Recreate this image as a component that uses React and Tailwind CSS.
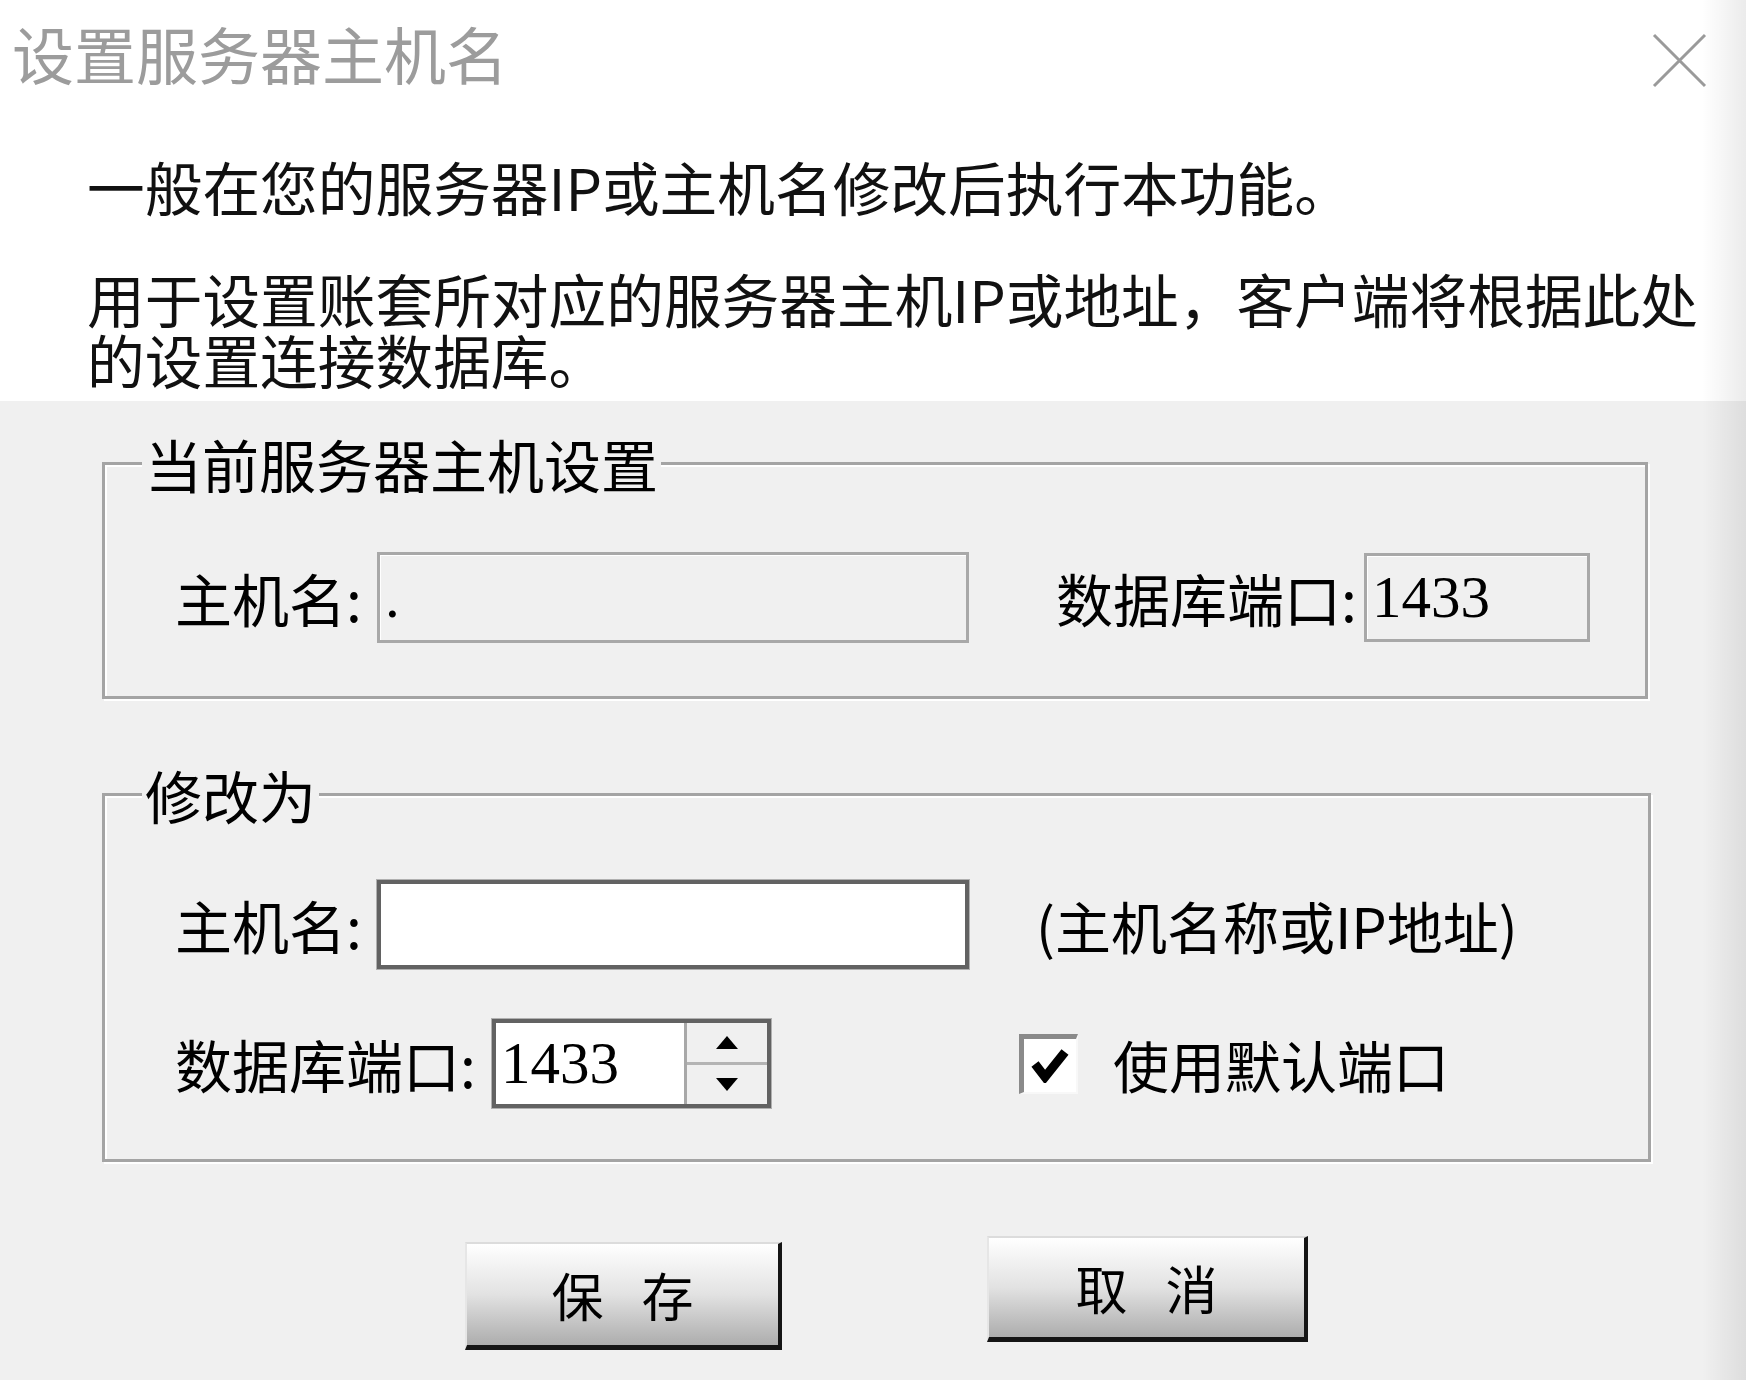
import React from "react";

// Etched group box with a caption sitting on the top border
const GroupBox = ({ title, className, children }) => (
  <div
    className={`relative border-[3px] border-[#a4a4a4] shadow-[inset_2px_2px_0_#ffffff,2px_2px_0_#ffffff] ${className}`}
  >
    <span className="absolute left-[37px] -top-[30px] bg-[#f0f0f0] px-[3px] text-[57px] leading-[57px] text-black whitespace-nowrap">
      {title}
    </span>
    {children}
  </div>
);

const Label = ({ w, children }) => (
  <span className={`${w} shrink-0 text-[57px] leading-[57px] text-black whitespace-nowrap`}>{children}</span>
);

const ReadOnlyBox = ({ w, h, value }) => (
  <div
    className={`${w} ${h} shrink-0 flex items-center pl-[5px] border-[3px] border-[#a8a8a8] bg-[#f0f0f0] shadow-[inset_1px_1px_0_#ffffff] font-['Liberation_Serif',serif] text-[59px] leading-none text-black`}
  >
    {value}
  </div>
);

const Spinner = () => (
  <div className="w-[279px] h-[89px] shrink-0 flex border-[4px] border-[#626262] shadow-[0_0_0_1px_#b0b0b0] bg-white">
    <div className="flex-1 flex items-center pl-[5px] font-['Liberation_Serif',serif] text-[59px] leading-none text-black">
      1433
    </div>
    <div className="w-[83px] flex flex-col border-l-[3px] border-[#a8a8a8] bg-[#f0f0f0]">
      <div className="flex-1 flex items-center justify-center border-b-[3px] border-[#b4b4b4]">
        <svg width="24" height="15" viewBox="0 0 24 15">
          <polygon points="12,1 23,14 1,14" fill="#000" />
        </svg>
      </div>
      <div className="flex-1 flex items-center justify-center">
        <svg width="24" height="15" viewBox="0 0 24 15">
          <polygon points="1,1 23,1 12,14" fill="#000" />
        </svg>
      </div>
    </div>
  </div>
);

const Button = ({ chars, className }) => (
  <button
    className={`flex items-center justify-center gap-[38px] border-t-2 border-l-2 border-t-[#dcdcdc] border-l-[#e6e6e6] border-r-[4px] border-b-[5px] border-r-[#151515] border-b-[#151515] bg-linear-to-b from-[#ffffff] via-[#e2e2e2] to-[#adadad] text-[52px] leading-none text-black ${className}`}
  >
    {chars.map((c) => (
      <span key={c}>{c}</span>
    ))}
  </button>
);

export default function App() {
  return (
    <div className="relative w-[1746px] h-[1380px] overflow-hidden bg-[#f0f0f0] font-['Noto_Sans_CJK_SC','Liberation_Sans',sans-serif]">
      {/* top white part */}
      <div className="h-[401px] bg-white">
        <div className="flex justify-between pl-[12px] pt-[22px] pr-[39px]">
          <span className="text-[62px] leading-[62px] text-[#9c9c9c] whitespace-nowrap">设置服务器主机名</span>
          <svg className="mt-[11px]" width="55" height="55" viewBox="0 0 55 55">
            <path d="M2 2 L53 53 M53 2 L2 53" stroke="#9a9a9a" strokeWidth="3" fill="none" />
          </svg>
        </div>
        <p className="mt-[68px] pl-[87px] text-[57.7px] leading-[61px] text-[#111] whitespace-nowrap">
          一般在您的服务器IP或主机名修改后执行本功能。
        </p>
        <p className="mt-[51px] pl-[87px] text-[57.7px] leading-[61px] text-[#111] whitespace-nowrap">
          用于设置账套所对应的服务器主机IP或地址，客户端将根据此处
          <br />
          的设置连接数据库。
        </p>
      </div>

      {/* current settings */}
      <GroupBox title="当前服务器主机设置" className="mt-[61px] ml-[102px] w-[1546px] h-[237px]">
        <div className="flex items-center pt-[87px] pl-[70px]">
          <Label w="w-[202px]">主机名:</Label>
          <ReadOnlyBox w="w-[592px]" h="h-[91px]" value="." />
          <div className="w-[87px] shrink-0" />
          <Label w="w-[308px]">数据库端口:</Label>
          <ReadOnlyBox w="w-[226px]" h="h-[89px]" value="1433" />
        </div>
      </GroupBox>

      {/* new settings */}
      <GroupBox title="修改为" className="mt-[94px] ml-[102px] w-[1549px] h-[369px]">
        <div className="flex flex-col pt-[84px] pl-[70px]">
          <div className="flex items-center">
            <Label w="w-[202px]">主机名:</Label>
            <div className="w-[592px] h-[89px] shrink-0 bg-white border-[4px] border-[#626262] shadow-[0_0_0_1px_#b0b0b0]" />
            <span className="ml-[67px] text-[56px] leading-[56px] text-black whitespace-nowrap">(主机名称或IP地址)</span>
          </div>
          <div className="flex items-center mt-[50px]">
            <Label w="w-[317px]">数据库端口:</Label>
            <Spinner />
            <div className="ml-[248px] w-[59px] h-[60px] shrink-0 flex items-center justify-center bg-white border-t-[5px] border-l-[5px] border-t-[#8a8a8a] border-l-[#8a8a8a] border-r-2 border-b-2 border-r-[#f8f8f8] border-b-[#f8f8f8]">
              <svg width="38" height="36" viewBox="0 0 38 36">
                <path d="M4 17 L14 30 L34 5" stroke="#000" strokeWidth="9" fill="none" strokeLinejoin="miter" />
              </svg>
            </div>
            <span className="ml-[35px] text-[56px] leading-[56px] text-black whitespace-nowrap">使用默认端口</span>
          </div>
        </div>
      </GroupBox>

      {/* buttons */}
      <div className="flex items-start mt-[74px] pl-[465px]">
        <Button chars={["保", "存"]} className="mt-[6px] w-[317px] h-[108px]" />
        <Button chars={["取", "消"]} className="ml-[205px] w-[321px] h-[106px]" />
      </div>

      {/* shaded right edge */}
      <div className="absolute top-0 right-0 w-[44px] h-full bg-linear-to-r from-[rgba(0,0,0,0)] to-[rgba(0,0,0,0.08)]" />
    </div>
  );
}
